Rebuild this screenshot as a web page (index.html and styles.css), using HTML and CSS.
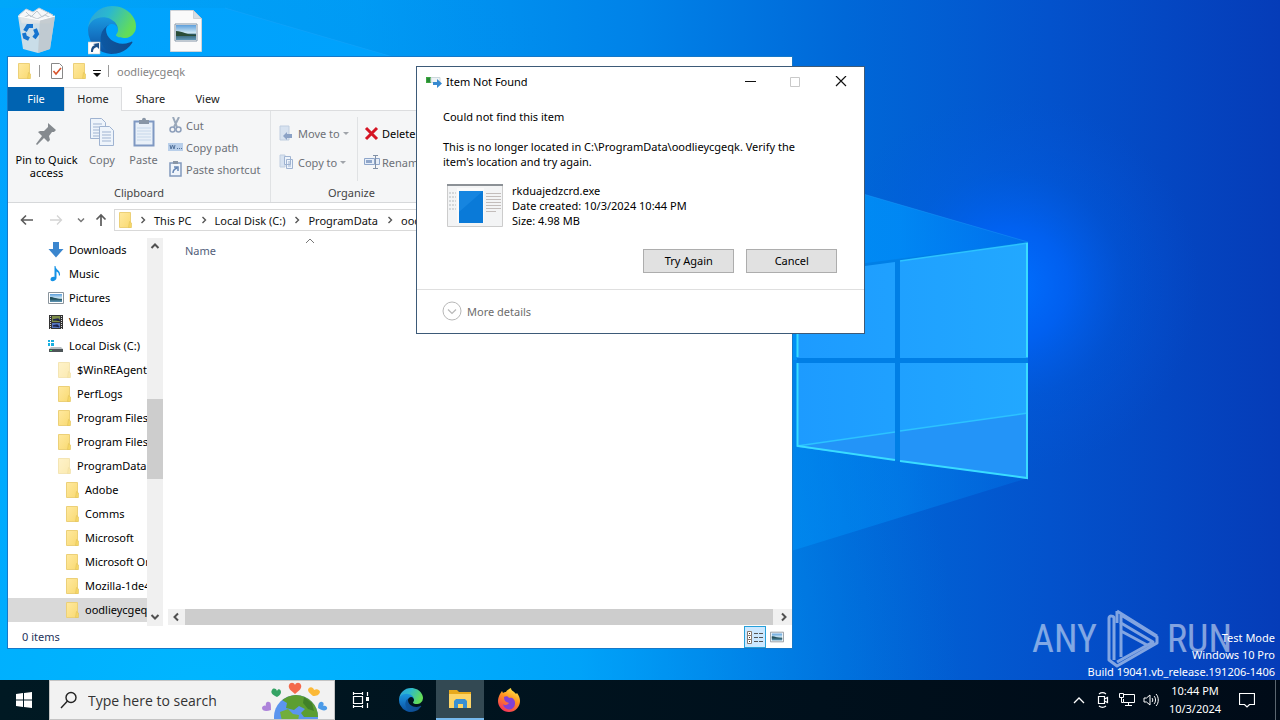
FILE: index.html
```html
<!DOCTYPE html>
<html lang="en">
<head>
<meta charset="utf-8">
<title>Item Not Found</title>
<link rel="stylesheet" href="styles.css">
</head>
<body>
<svg class="defs" aria-hidden="true">
  <defs>
    <linearGradient id="edgeA" x1="0" y1="0" x2="1" y2="0"><stop offset="0" stop-color="#0c59a4"/><stop offset="1" stop-color="#114a8b"/></linearGradient>
    <linearGradient id="edgeB" x1="0" y1="0" x2="0" y2="1"><stop offset="0" stop-color="#1b9de2"/><stop offset=".5" stop-color="#1475c4"/><stop offset="1" stop-color="#0a4f9e"/></linearGradient>
    <linearGradient id="edgeC" x1="0" y1="0" x2="1" y2=".4"><stop offset="0" stop-color="#2f9fd8"/><stop offset=".45" stop-color="#2bb8cf"/><stop offset="1" stop-color="#63dd58"/></linearGradient>
    <linearGradient id="fold" x1="0" y1="0" x2="1" y2="1"><stop offset="0" stop-color="#ffe9a0"/><stop offset="1" stop-color="#f9da72"/></linearGradient>
    <linearGradient id="sky" x1="0" y1="0" x2="0" y2="1"><stop offset="0" stop-color="#5d9fdb"/><stop offset=".55" stop-color="#d6ecf5"/><stop offset=".6" stop-color="#2c5a66"/><stop offset="1" stop-color="#5f97b8"/></linearGradient>
    <linearGradient id="fire" x1=".8" y1="0" x2=".3" y2="1"><stop offset="0" stop-color="#fff04a"/><stop offset=".45" stop-color="#ff9420"/><stop offset="1" stop-color="#f5305c"/></linearGradient>
  </defs>
  <symbol id="i-folder" viewBox="0 0 16 16"><path d="M2.500.500h11v15h-11z" fill="url(#fold)" stroke="#ecd078"/><path d="M12.500 9.500l2 1.500v4.500h-3z" fill="#f6d766" stroke="#e2c35c" stroke-width=".6"/></symbol>
  <symbol id="i-edge" viewBox="0 0 256 256">
    <path fill="url(#edgeA)" d="M231 190.500c-3.400 1.800-6.900 3.400-10.500 4.700a101.700 101.700 0 0 1-35.900 6.400c-47.300 0-88.500-32.500-88.500-74.300a31.500 31.500 0 0 1 16.400-27.300c-42.800 1.800-53.800 46.400-53.800 72.500 0 74 68.100 81.400 82.800 81.400 7.900 0 19.800-2.300 27-4.600l1.300-.4a128.300 128.300 0 0 0 66.600-52.800 4 4 0 0 0-5.400-5.600z"/>
    <path fill="url(#edgeB)" d="M105.700 241.400a79.200 79.200 0 0 1-22.700-21.300 80.700 80.700 0 0 1 29.500-120c3.200-1.500 8.500-4.100 15.600-4a32.400 32.400 0 0 1 25.700 13 31.900 31.900 0 0 1 6.300 18.700c0-.2 24.500-79.600-80-79.600-43.900 0-80 41.600-80 78.200a130.200 130.200 0 0 0 12.100 56 128 128 0 0 0 156.400 67 75.500 75.500 0 0 1-62.800-8z"/>
    <path fill="url(#edgeC)" d="M152.300 148.900c-.8 1-3.300 2.500-3.300 5.700 0 2.600 1.700 5.100 4.700 7.200 14.400 10 41.500 8.700 41.600 8.700a59.600 59.600 0 0 0 30.300-8.300 61.400 61.400 0 0 0 30.400-52.900c.3-22.400-8-37.300-11.300-43.900C223.500 23.900 177.700 0 128 0A128 128 0 0 0 0 126.200c.5-36.500 36.800-66 80-66 3.500 0 23.500.3 42 10a72.600 72.600 0 0 1 30.900 29.300c6.100 10.600 7.200 24.100 7.200 29.500 0 5.400-2.700 13.300-7.800 19.900z"/>
  </symbol>
  <symbol id="i-picture" viewBox="0 0 16 16"><path d="M.5 2.500h15v11H.5z" fill="#fff" stroke="#8a949c"/><path d="M2 4h12v8H2z" fill="url(#sky)"/><path d="M2 7c4 0 6 2 12 2v.5H2z" fill="#24505c"/></symbol>
  <symbol id="i-right" viewBox="0 0 16 16"><path d="M6.500 5L9.500 8l-3 3" fill="none" stroke="#555" stroke-width="1.400"/></symbol>
  <symbol id="i-up" viewBox="0 0 16 16"><path d="M4.500 10L8 6.500 11.500 10" fill="none" stroke="#505050" stroke-width="2"/></symbol>
</svg>

<main class="desktop">
  <svg class="wallpaper" viewBox="0 0 1280 720" preserveAspectRatio="xMidYMid slice" aria-hidden="true">
    <defs>
      <linearGradient id="bg" x1="0" y1="0" x2="1" y2="0"><stop offset="0" stop-color="#00a9fb"/><stop offset=".28" stop-color="#009cf5"/><stop offset=".5" stop-color="#0082e8"/><stop offset=".66" stop-color="#0068d8"/><stop offset=".82" stop-color="#0352cc"/><stop offset="1" stop-color="#053cb8"/></linearGradient>
      <radialGradient id="glow" gradientUnits="userSpaceOnUse" cx="1010" cy="285" r="190"><stop offset="0" stop-color="#0070ff"/><stop offset=".3" stop-color="#0066ff" stop-opacity=".7"/><stop offset=".6" stop-color="#0060ee" stop-opacity=".25"/><stop offset="1" stop-color="#0058e0" stop-opacity="0"/></radialGradient>
      <radialGradient id="low" gradientUnits="userSpaceOnUse" cx="200" cy="700" r="760"><stop offset="0" stop-color="#00b6ff"/><stop offset=".5" stop-color="#00aeff" stop-opacity=".7"/><stop offset="1" stop-color="#0088ea" stop-opacity="0"/></radialGradient>
      <linearGradient id="beam" gradientUnits="userSpaceOnUse" x1="600" y1="0" x2="1028" y2="0"><stop offset="0" stop-color="#00a4ff"/><stop offset=".7" stop-color="#0094fc"/><stop offset="1" stop-color="#0072e6"/></linearGradient>
      <linearGradient id="pane" x1="0" y1="0" x2="1" y2="0"><stop offset="0" stop-color="#1d9bff"/><stop offset="1" stop-color="#22a8ff"/></linearGradient>
    </defs>
    <rect width="1280" height="720" fill="url(#bg)"/>
    <rect width="1280" height="720" fill="url(#low)"/>
    <rect width="1280" height="720" fill="url(#glow)"/>
    <path d="M225 8L1028 242V360H0V8z" fill="url(#beam)" opacity=".75"/>
    <path d="M0 360H1028V478L600 610H0z" fill="url(#beam)" opacity=".4"/>
    <path d="M225 8L1028 242" stroke="#28a9ff" opacity=".3"/>
    <path d="M797 272L1028 242V479L797 447z" fill="#007fe6"/>
    <path d="M797 275L895 262V358H797zM900 261L1028 243V358H900zM797 363H895V460L797 447zM900 363H1028V478L900 461z" fill="url(#pane)"/>
    <path d="M797 446L895 432V460zM900 431L1028 413V478L900 461z" fill="#2394f8"/>
    <path d="M797 446L895 432M900 431L1028 413M900 261L1028 243" stroke="#2cc3ff" stroke-width="1.500"/>
    <path d="M797.500 275V357M797.500 363V446L895 460M900 461L1027 478V363M1027 357V243" fill="none" stroke="#3adcff" stroke-width="2"/>
  </svg>

  <div class="shortcuts">
    <svg width="40" height="48" viewBox="0 0 40 48" role="img" aria-label="Recycle Bin"><path d="M2 8l7-6 7 3 6-4 6 3 8 4-3 8H5z" fill="#f5f7f9" stroke="#c8cfd6"/><path d="M9 5l5 5 6-6 5 6 7-5M6 11l6-3 8 4 8-4 6 3" stroke="#bfc8cf" fill="none"/><path d="M1 9l22 4 15-4-5 33-12 4-15-4z" fill="#dfe3e6" opacity=".9"/><path d="M23 13l15-4-5 33-12 4z" fill="#bec5ca" opacity=".8"/><path d="M1 9l22 4 15-4" fill="none" stroke="#fff"/><g fill="none" stroke="#1574cf" stroke-width="4"><path d="M8 24l3-5h5"/><path d="M18 22l2 5-3 4"/><path d="M12 32l-4-2-1-4"/></g></svg>
    <svg width="49" height="49" viewBox="0 0 49 49" role="img" aria-label="Microsoft Edge"><use href="#i-edge" width="48" height="48"/><path d="M0 36h12v12H0z" fill="#fff" stroke="#c4c4c4" stroke-width=".6"/><path d="M3 46c0-4 1-6 4-7l-2-1 6-1v6l-2-2c-3 1-4 2-4 5z" fill="#1d4f87"/></svg>
    <svg width="32" height="42" viewBox="0 0 32 42" role="img" aria-label="Image file"><path d="M.5.500h23l8 8v33H.5z" fill="#fafafa" stroke="#d0d4d8"/><path d="M23.500.500v8h8z" fill="#d6dde2" stroke="#b8c0c8" stroke-width=".6"/><path d="M5 14h22v17H5z" fill="#fff" stroke="#8394a5"/><path d="M6 15h20v15H6z" fill="url(#sky)"/><path d="M6 21c7 0 10 4 20 4v1H6z" fill="#2b4e38"/></svg>
  </div>

  <section class="explorer" aria-label="oodlieycgeqk">
    <header class="ex-title">
      <svg class="ic" viewBox="0 0 16 16"><use href="#i-folder"/></svg>
      <i class="bar"></i>
      <svg class="ic check" viewBox="0 0 16 16"><path d="M2.500.500h8l3 3v12h-11z" fill="#fff" stroke="#888"/><path d="M4.500 8l2.500 3 5-6" fill="none" stroke="#d8542c" stroke-width="1.600"/></svg>
      <svg class="ic" viewBox="0 0 16 16"><use href="#i-folder"/></svg>
      <svg class="more" viewBox="0 0 8 16"><path d="M0 7h8v1H0zM0 10h8L4 14z" fill="#111"/></svg>
      <i class="bar"></i>
      <span>oodlieycgeqk</span>
    </header>
    <nav class="tabs"><button class="file">File</button><button class="on">Home</button><button>Share</button><button>View</button></nav>
    <div class="ribbon">
      <div class="group clip">
        <div class="tools">
          <button class="big pin"><svg width="24" height="28" viewBox="0 0 24 28"><path d="M13 3l8 7-2 2h-2l-3 4 1 4-2 2-4-4-7 7-1-1 6-8-4-4 2-1h4l4-4v-2z" fill="#858a8f"/></svg>Pin to Quick<br>access</button>
          <button class="big off copy"><svg width="26" height="30" viewBox="0 0 26 30"><g fill="#eef4fb" stroke="#9fb3d1"><path d="M1.500 1.500h11l4 4v16h-15z"/><path d="M10.500 9.500h10l4 4v15h-14z"/></g><path d="M4 7h9M4 10h6M4 13h6M4 16h6M4 19h6M13 15h9M13 18h9M13 21h9M13 24h9" stroke="#9fb3d1"/></svg>Copy</button>
          <button class="big off paste"><svg width="22" height="30" viewBox="0 0 22 30"><path d="M1.500 4.500h19v24h-19z" fill="#e9f0f8" stroke="#7f98c2" stroke-width="2"/><path d="M6 3h3c0-3 4-3 4 0h3v4H6z" fill="#8996a6"/><path d="M4 11h14M4 14h14M4 17h14M4 20h14M4 23h14" stroke="#c6d7ea"/></svg>Paste</button>
          <div class="stack off">
            <button><svg class="ic" viewBox="0 0 16 16"><path d="M5 0l4 10M11 0L6 10" stroke="#9aa8ba" stroke-width="2"/><circle cx="4.500" cy="12.500" r="2.500" fill="none" stroke="#8fa0bb" stroke-width="1.500"/><circle cx="10.500" cy="12.500" r="2.500" fill="none" stroke="#8fa0bb" stroke-width="1.500"/></svg>Cut</button>
            <button><svg class="ic" viewBox="0 0 16 16"><path d="M0 4h15v8H0z" fill="#b9cfea"/><path d="M2 6l1 4 1.500-4L6 10l1-4" stroke="#54739c" fill="none"/><path d="M9 9.500h5" stroke="#54739c" stroke-dasharray="1 1"/></svg>Copy path</button>
            <button><svg class="ic" viewBox="0 0 16 16"><path d="M2 2h11v13H2z" fill="#f0f5fb" stroke="#8199bd" stroke-width="1.500"/><path d="M5 0h5v3H5z" fill="#8996a6"/><path d="M5 12c0-3 1-4 4-5M6 6h4v4" fill="none" stroke="#6586b5" stroke-width="1.500"/></svg>Paste shortcut</button>
          </div>
        </div>
        <div class="label">Clipboard</div>
      </div>
      <div class="group org">
        <div class="tools">
          <div class="stack wide off">
            <button><svg class="ic" viewBox="0 0 16 16"><path d="M1 1h9v14H1z" fill="#d7e2f0" stroke="#c0cee0"/><path d="M13 13V9H8V7l-4 4 4 4v-2z" fill="#8ba2c6"/></svg>Move to<b class="dd"></b></button>
            <button><svg class="ic" viewBox="0 0 16 16"><path d="M1 1h5v12H1z" fill="#d7e2f0" stroke="#c0cee0"/><path d="M5.500 2.500h6v8h-6zM7.500 5.500h6v9h-6z" fill="#eef4fb" stroke="#9fb3d1"/><path d="M9 8h3M9 10h3M9 12h3" stroke="#9fb3d1"/></svg>Copy to<b class="dd"></b></button>
          </div>
          <div class="stack wide second">
            <button><svg class="ic" viewBox="0 0 16 16"><path d="M2 3l11 11M13 3L2 14" stroke="#d51524" stroke-width="3"/></svg>Delete</button>
            <button class="off"><svg class="ic" viewBox="0 0 16 16"><path d="M.5 4.500h10v6H.5zM12 4.500h3.500v6H12" fill="#e6eef8" stroke="#8fa6ca"/><path d="M2 6h6v3H2z" fill="#8fa6ca"/><path d="M9 1.500h5M9 14.500h5M11.500 2v12" stroke="#8190a6"/></svg>Rename</button>
          </div>
        </div>
        <div class="label">Organize</div>
      </div>
    </div>
    <div class="address">
      <svg class="nav" viewBox="0 0 16 16"><path d="M14 8H3M7 3.500L2.500 8 7 12.500" fill="none" stroke="#5b5b5b" stroke-width="1.600"/></svg>
      <svg class="nav" viewBox="0 0 16 16"><path d="M2 8h11M9 3.500L13.500 8 9 12.500" fill="none" stroke="#d4d4d4" stroke-width="1.300"/></svg>
      <svg class="caret" viewBox="0 0 8 16"><path d="M1 6.500l3 3 3-3" fill="none" stroke="#777" stroke-width="1.500"/></svg>
      <svg class="nav last" viewBox="0 0 16 16"><path d="M8 14V3M3.500 7.500L8 3l4.500 4.500" fill="none" stroke="#5b5b5b" stroke-width="1.700"/></svg>
      <div class="crumbs">
        <svg class="ic" viewBox="0 0 16 16"><use href="#i-folder"/></svg>
        <svg class="sep"><use href="#i-right"/></svg><a href="#pc">This PC</a>
        <svg class="sep"><use href="#i-right"/></svg><a href="#c">Local Disk (C:)</a>
        <svg class="sep"><use href="#i-right"/></svg><a href="#pd">ProgramData</a>
        <svg class="sep"><use href="#i-right"/></svg><a href="#here">oodlieycgeqk</a>
      </div>
    </div>
    <div class="body">
      <ul class="tree">
        <li><svg class="ic" viewBox="0 0 16 16"><path d="M5 0h6v7h4.500L8 15.500.500 7H5z" fill="#3b86ce"/></svg>Downloads</li>
        <li><svg class="ic" viewBox="0 0 16 16"><path d="M7.500 0c0 4 5 4 4.500 9l-1 1c0-3-1.500-4-2.500-4.500V12c0 3-6 4.500-6 1.500 0-2.500 3-3 4-2.500V0z" fill="#1492e6"/></svg>Music</li>
        <li><svg class="ic" viewBox="0 0 16 16"><use href="#i-picture"/></svg>Pictures</li>
        <li><svg class="ic" viewBox="0 0 16 16"><path d="M1 1h14v14H1z" fill="#333"/><path d="M4 2h8v6H4z" fill="#7d8d48"/><path d="M4 9h8v5H4z" fill="#5474bd"/><path d="M2.500 2v13M13.500 2v13" stroke="#ddd" stroke-dasharray="1 1"/><path d="M5 6l5-1 2 2M5 12l4-1 2 2" stroke="#1d2452" stroke-width="1.500"/></svg>Videos</li>
        <li><svg class="ic" viewBox="0 0 16 16"><path d="M0 2h2v2H0zM3 2h3v2H3zM0 5h2v3H0zM3 5h3v3H3z" fill="#19b0e0"/><path d="M3 9h10l2 2H1z" fill="#b8bec2"/><path d="M1 11h14v3H1z" fill="#4d5558"/><path d="M2 12h2v1H2z" fill="#49d768"/></svg>Local Disk (C:)</li>
        <li class="l2 faint"><svg class="ic"><use href="#i-folder"/></svg>$WinREAgent</li>
        <li class="l2"><svg class="ic"><use href="#i-folder"/></svg>PerfLogs</li>
        <li class="l2"><svg class="ic"><use href="#i-folder"/></svg>Program Files</li>
        <li class="l2"><svg class="ic"><use href="#i-folder"/></svg>Program Files (x86)</li>
        <li class="l2 faint"><svg class="ic"><use href="#i-folder"/></svg>ProgramData</li>
        <li class="l3"><svg class="ic"><use href="#i-folder"/></svg>Adobe</li>
        <li class="l3"><svg class="ic"><use href="#i-folder"/></svg>Comms</li>
        <li class="l3"><svg class="ic"><use href="#i-folder"/></svg>Microsoft</li>
        <li class="l3"><svg class="ic"><use href="#i-folder"/></svg>Microsoft OneDrive</li>
        <li class="l3"><svg class="ic"><use href="#i-folder"/></svg>Mozilla-1de4eec8</li>
        <li class="l3 sel"><svg class="ic"><use href="#i-folder"/></svg>oodlieycgeqk</li>
      </ul>
      <div class="vscroll"><svg class="ic"><use href="#i-up"/></svg><i></i><svg class="ic flip"><use href="#i-up"/></svg></div>
      <div class="files">
        <div class="cols"><span>Name</span><svg width="10" height="6" viewBox="0 0 10 6"><path d="M1 5l4-4 4 4" fill="none" stroke="#777"/></svg></div>
        <div class="hscroll"><svg class="ic ccw"><use href="#i-up"/></svg><i></i><svg class="ic cw"><use href="#i-up"/></svg></div>
      </div>
    </div>
    <footer class="status"><span>0 items</span>
      <button class="on" aria-label="Details"><svg width="16" height="14" viewBox="0 0 16 14"><path d="M.5 1.500h4v4h-4zM.5 5.500h4v4h-4zM.5 9.500h4v4h-4z" fill="#fff" stroke="#88796f"/><path d="M2 3.500h1M2 7.500h1M2 11.500h1" stroke="#333"/><path d="M7 3.500h9M7 7.500h9M7 11.500h9" stroke="#555" stroke-dasharray="4 1"/></svg></button>
      <button aria-label="Large icons"><svg width="14" height="14" viewBox="0 0 16 16"><use href="#i-picture"/></svg></button>
    </footer>
  </section>

  <section class="dialog" role="dialog" aria-labelledby="dt">
    <header class="d-title">
      <svg class="ic" viewBox="0 0 16 16"><path d="M0 3h5v6H0z" fill="#3da63f"/><path d="M1 4h3v4H1z" fill="#278a35"/><path d="M5 3.500h9v5H5z" fill="#eef3f5" stroke="#cdd8dc"/><path d="M7 8h4V5l5 4.500L11 14v-3H7z" fill="#3789d0"/></svg>
      <span id="dt">Item Not Found</span>
      <button aria-label="Minimize"><svg width="12" height="12"><path d="M0 5.500h11" stroke="#111"/></svg></button>
      <button aria-label="Maximize" disabled><svg width="12" height="12"><path d="M.5 1.500h9v9h-9z" fill="none" stroke="#c9c9c9"/></svg></button>
      <button aria-label="Close"><svg width="12" height="12"><path d="M1 0l10 10M11 0L1 10" stroke="#111" stroke-width="1.200"/></svg></button>
    </header>
    <div class="d-body">
      <h1>Could not find this item</h1>
      <p>This is no longer located in C:\ProgramData\oodlieycgeqk. Verify the<br>item's location and try again.</p>
      <div class="item">
        <svg width="56" height="43" viewBox="0 0 56 43"><path d="M.5.500h55v42H.5z" fill="#f3f4f5" stroke="#ccc"/><path d="M0 0h56v2H0z" fill="#8c9196"/><path d="M10 4h27v35H10z" fill="#fafafa"/><path d="M12 7h24v32H12z" fill="#0a7ad8"/><path d="M12 7h24L12 28z" fill="#1685e0"/><path d="M39 9.500h15M39 12.500h15M39 15.500h15M39 18.500h15M39 21.500h15M39 24.500h15M39 27.500h10" stroke="#c3bdbb"/><path d="M2 9h7M2 13h7M2 17h7M2 21h7M2 25h7" stroke="#b5babd" stroke-dasharray="2 1"/></svg>
        <div>rkduajedzcrd.exe<br>Date created: 10/3/2024 10:44 PM<br>Size: 4.98 MB</div>
      </div>
      <div class="actions"><button>Try Again</button><button>Cancel</button></div>
    </div>
    <footer><button><svg width="20" height="20" viewBox="0 0 20 20"><circle cx="10" cy="10" r="9" fill="none" stroke="#b8b8b8"/><path d="M6 8.500l4 4 4-4" fill="none" stroke="#b8b8b8" stroke-width="1.200"/></svg>More details</button></footer>
  </section>

  <div class="brand"><span>ANY</span><svg width="56" height="60" viewBox="0 0 56 60"><g fill="none" stroke="#fff" stroke-width="3" stroke-linejoin="round"><path d="M9 44V9c0-2-5-3-5 0v42l8 6 40-23v-6L16 6v8l32 19-36 20"/><path d="M9 44v7"/><path d="M16 14v34M16 22l26 14"/><path d="M12 2L52 27M12 2v12"/></g></svg><span>RUN</span></div>
  <div class="build">Test Mode<br>Windows 10 Pro<br>Build 19041.vb_release.191206-1406</div>
</main>

<footer class="taskbar">
  <button class="tb start" aria-label="Start"><svg width="16" height="16" viewBox="0 0 16 16"><path d="M0 2l7-1v6.500H0zM8 1l8-1v7.500H8zM0 8.500h7V15l-7-1zM8 8.500h8V16l-8-1z" fill="#fff"/></svg></button>
  <div class="search">
    <svg width="18" height="18" viewBox="0 0 18 18"><circle cx="11" cy="6.500" r="5" fill="none" stroke="#222" stroke-width="1.400"/><path d="M7.500 10L1 17" stroke="#222" stroke-width="1.400"/></svg>
    <input type="text" placeholder="Type here to search" aria-label="Type here to search">
    <svg width="70" height="37" viewBox="0 0 70 37"><defs><clipPath id="gl"><circle cx="36" cy="35" r="22"/></clipPath></defs><circle cx="36" cy="35" r="22" fill="#5b95ee"/><g clip-path="url(#gl)"><path d="M28 14l14-3 14 10 4 14H44l-3-4 4-4-6-3-5 4-8-2 1-5-5-3z" fill="#5c9e31"/><path d="M20 30l8-3 5 5 6 1-1 6H22z" fill="#72ae3b"/><path d="M44 15l8 6 2 8-6-2-5-6z" fill="#41812a"/></g><g><path d="M35 12c-5-4-7-6-6-9s5-3 6 0c1-3 5-3 6 0s-1 5-6 9z" fill="#f4694c"/><path d="M17 15c-4-2-7-4-5-7 1-2 4-2 5 1 1-3 4-2 4 1 0 2-1 3-4 5z" fill="#35a365"/><path d="M53 14c-5-4-6-6-4-8s5 0 5 2c3-2 6 0 6 2-1 3-3 4-7 4z" fill="#fbb938"/><path d="M11 28c-5 2-9 1-9-2 0-2 3-3 4-2-1-3 1-5 3-4 2 0 2 3 2 8z" fill="#ad83da"/><path d="M58 26c0-5 2-7 4-6 2 0 2 3 1 4 2-1 5 1 4 3-1 2-5 2-9-1z" fill="#4b9be8"/></g></svg>
  </div>
  <button class="tb view" aria-label="Task View"><svg width="18" height="16" viewBox="0 0 18 16"><path d="M1 1.500h10M1 14.500h10M1.500 4.500h9v7h-9zM1.500 0v3M10.500 0v3M1.500 13v3M10.500 13v3M15.500 0v4M15.500 11v5" fill="none" stroke="#fff" stroke-width="1.200"/><path d="M14 5h3v4h-3z" fill="#fff"/></svg></button>
  <button class="tb" aria-label="Edge"><svg width="24" height="24"><use href="#i-edge"/></svg></button>
  <button class="tb active" aria-label="File Explorer"><svg width="22" height="20" viewBox="0 0 22 20"><path d="M0 1h8l2 2h12v4H0z" fill="#e8a91c"/><path d="M0 5h22v14H0z" fill="#fdd467"/><path d="M5 19v-7l2-2h9l2 2v7h-4v-4H9v4z" fill="#3a8fd2"/></svg></button>
  <button class="tb" aria-label="Firefox"><svg width="24" height="24" viewBox="0 0 24 24"><path d="M3 6l2-3 1 2c1-1 2-1 3-1 1-2 3-3 5-4 0 3 3 3 5 6l1-1c2 3 3 5 3 8a11 11 0 0 1-22 0c0-3 1-5 2-7z" fill="url(#fire)"/><path d="M7 9c2-1 4-1 5 1 3-1 6 1 6 5a6 6 0 0 1-12 1c1 2 5 1 6-1-3-1-5-2-5-6z" fill="#8141d6"/></svg></button>
  <div class="tray">
    <button aria-label="Show hidden icons"><svg width="12" height="8"><path d="M1 7l5-5 5 5" fill="none" stroke="#fff" stroke-width="1.300"/></svg></button>
    <button aria-label="Meet Now"><svg width="14" height="16" viewBox="0 0 14 16"><path d="M2.500 4.500h6v7h-6zM8.500 7l3-1.500v5L8.500 9M3 2c2-1.500 5-1.500 7 0M3 14c2 1.500 5 1.500 7 0" fill="none" stroke="#fff" stroke-width="1.200"/></svg></button>
    <button aria-label="Network"><svg width="16" height="16" viewBox="0 0 16 16"><path d="M5 2.500h10.500v8H4.500V7M9.500 10.500v3M6 13.500h7M.5 1.500h4v4h-4zM2.500 5.500v5h2" fill="none" stroke="#fff"/></svg></button>
    <button aria-label="Volume"><svg width="17" height="14" viewBox="0 0 17 14"><path d="M1 5h2.500L7 2v10L3.500 9H1zM9 5c1 1 1 3 0 4M11 3c2 2 2 6 0 8M13 1c3 3 3 9 0 12" fill="none" stroke="#fff"/></svg></button>
    <time>10:44 PM<br>10/3/2024</time>
    <button class="note" aria-label="Notifications"><svg width="16" height="17" viewBox="0 0 16 17"><path d="M.5 1.500h15v11h-5L8 15l-2.500-2.500h-5z" fill="none" stroke="#fff" stroke-width="1.200"/></svg></button>
    <i class="peek"></i>
  </div>
</footer>
</body>
</html>
```
FILE: styles.css
```css
*{box-sizing:border-box}
body{margin:0;height:100vh;display:flex;flex-direction:column;overflow:hidden;font:11px/15px "Noto Sans","Open Sans",sans-serif;color:#000}
button{font:inherit;color:inherit;background:none;border:0;padding:0;margin:0}
svg{display:block;flex:none}
.defs{position:absolute;width:0;height:0}
.ic{width:16px;height:16px}
.off{color:#6d7178}

.desktop{position:relative;flex:1;min-height:0;overflow:hidden}
.wallpaper{position:absolute;left:0;top:0;width:100%;height:100vh}
.shortcuts{position:absolute;left:17px;top:6px;display:flex;align-items:center;gap:33px}
.shortcuts svg:first-child{margin-right:-2px}

.explorer{position:absolute;left:7px;top:56px;bottom:31px;width:61.4%;background:#fff;border:1px solid #1678c8;display:flex;flex-direction:column;overflow:hidden}
.ex-title{display:flex;align-items:center;height:30px;flex:none;padding:0 0 2px 8px;color:#838383}
.ex-title .bar{width:1px;height:12px;background:#999;margin:0 7px}
.ex-title .check{margin:0 6px 0 2px}
.ex-title .more{width:8px;height:16px;margin-left:6px}
.ex-title .bar:last-of-type{margin:0 8px 0 7px}
.tabs{display:flex;height:24px;flex:none;border-bottom:1px solid #dcdddf}
.tabs button{width:57px;height:24px;padding-bottom:2px;color:#222}
.tabs .file{background:#0063b1;color:#fff;width:56px}
.tabs .on{background:#f5f6f7;border:1px solid #dcdddf;border-bottom:0}
.tabs button:nth-child(2){width:58px}
.ribbon{display:flex;height:92px;flex:none;background:#f5f6f7;border-bottom:1px solid #d6d8da}
.group{display:flex;flex-direction:column;border-right:1px solid #e0e2e4;padding:6px 0 2px;flex:none}
.clip{width:263px}
.org{width:162px}
.label{text-align:center;color:#444}
.tools{display:flex;flex:1}
.big{display:flex;flex-direction:column;align-items:center;line-height:13px;white-space:nowrap}
.big svg{margin-bottom:6px}
.pin{width:77px}
.pin svg{margin:3px 0 5px}
.copy{width:34px}
.paste{width:49px}
.stack{display:flex;flex-direction:column;gap:6px;white-space:nowrap}
.stack button{display:flex;align-items:center;gap:2px;height:16px}
.wide{gap:13px;padding:8px 0 0 8px;width:86px;flex:none}
.second{border-left:1px solid #e0e2e4;padding-left:6px;height:64px}
.wide button{gap:3px}
.second button{gap:2px}
.dd{border:3px solid transparent;border-top-color:#a0a4aa;border-bottom:0}
.address{display:flex;align-items:center;height:35px;flex:none;padding:0 0 1px 11px}
.nav{width:16px;height:16px;margin-right:13px}
.caret{width:8px;height:16px;margin-right:8px}
.address .last{margin-right:5px}
.crumbs{flex:1;display:flex;align-items:center;height:22px;border:1px solid #d9d9d9;padding-left:2px;white-space:nowrap;overflow:hidden}
.crumbs a{color:#111;text-decoration:none}
.sep{width:16px;height:16px;margin:0 3px 0 4px}
.crumbs .ic+.sep{margin:0 3px 0 2px}
.body{flex:1;min-height:0;display:flex}
.tree{list-style:none;margin:0;padding:0;width:139px;overflow:hidden;white-space:nowrap;flex:none}
.tree li{display:flex;align-items:center;gap:5px;height:24px;padding:0 0 1px 40px}
.tree .l2{padding-left:48px}
.tree .l3{padding-left:56px}
.tree .faint svg{opacity:.55}
.tree .sel{background:#d9d9d9}
.vscroll{width:16px;background:#f0f0f0;display:grid;grid-template-rows:17px 144fr 80fr 130fr 17px;flex:none}
.vscroll i{background:#cdcdcd;grid-row:3}
.vscroll .flip{grid-row:5}
.flip{transform:rotate(180deg)}
.cw{transform:rotate(90deg)}
.ccw{transform:rotate(-90deg)}
.files{flex:1;min-width:0;margin-left:5px;display:flex;flex-direction:column;justify-content:space-between}
.cols{display:grid;grid-template-columns:120px auto;padding:5px 0 0 17px;color:#52607a}
.cols svg{margin-top:-5px}
.hscroll{display:flex;background:#f0f0f0;height:16px;gap:1px;margin-bottom:1px}
.hscroll i{flex:1;background:#cdcdcd}
.hscroll .cw{margin-left:2px}
.status{display:flex;align-items:center;height:22px;flex:none;padding:0 4px 0 14px;color:#26335b}
.status span{flex:1;padding-bottom:2px}
.status button{width:22px;height:22px;display:grid;place-items:center}
.status .on{background:#cce8ff;border:1px solid #26a0da}

.dialog{position:absolute;left:32.5%;top:66px;width:35.1%;min-width:420px;background:#fff;border:1px solid #3d5a78}
.d-title{display:flex;align-items:center;height:29px;padding:0 3px 0 9px;gap:4px}
.d-title span{flex:1}
.d-title button{width:41px;height:28px;display:grid;place-items:center}
.d-body{padding:13px 27px 16px 26px}
.dialog h1{font:inherit;margin:0 0 15px}
.dialog p{margin:0;white-space:nowrap}
.item{display:flex;gap:9px;margin:14px 0 21px 4px;align-items:center}
.actions{display:flex;justify-content:flex-end;gap:12px}
.actions button{width:91px;height:24px;padding-bottom:2px;background:#e1e1e1;border:1px solid #adadad}
.dialog footer{border-top:1px solid #dfdfdf;padding:11px 25px 12px;color:#6d6d6d}
.dialog footer button{display:flex;align-items:center;gap:5px}

.brand{position:absolute;right:48px;bottom:9px;display:flex;align-items:center;gap:6px;color:#fff;opacity:.5;font:400 38px/64px "Roboto Condensed","Liberation Sans Narrow",sans-serif}
.brand span:first-child{margin-right:2px}
.build{position:absolute;right:5px;bottom:0;text-align:right;color:#fff;line-height:17px}

.taskbar{display:flex;gap:1px;height:40px;flex:none;background:linear-gradient(90deg,#001923,#000b18)}
.tb{width:48px;display:grid;place-items:center}
.view{width:50px}
.active{background:#334953;border-bottom:2px solid #76b9ed}
.search{width:286px;background:#f2f2f2;border:1px solid #c4c4c4;display:flex;align-items:center;padding:0 4px 0 10px;gap:10px}
.search input{flex:1;min-width:0;border:0;padding:0;background:none;font:14px "Open Sans",sans-serif}
.search input::placeholder{color:#333;opacity:1}
.tray{margin-left:auto;display:flex;color:#fff}
.tray button{width:24px;display:grid;place-items:center}
.tray time{width:60px;padding:2px 0 0 4px;text-align:center;line-height:18px}
.tray .note{width:48px}
.peek{width:5px;margin-left:4px;border-left:1px solid #5b6670}
```
